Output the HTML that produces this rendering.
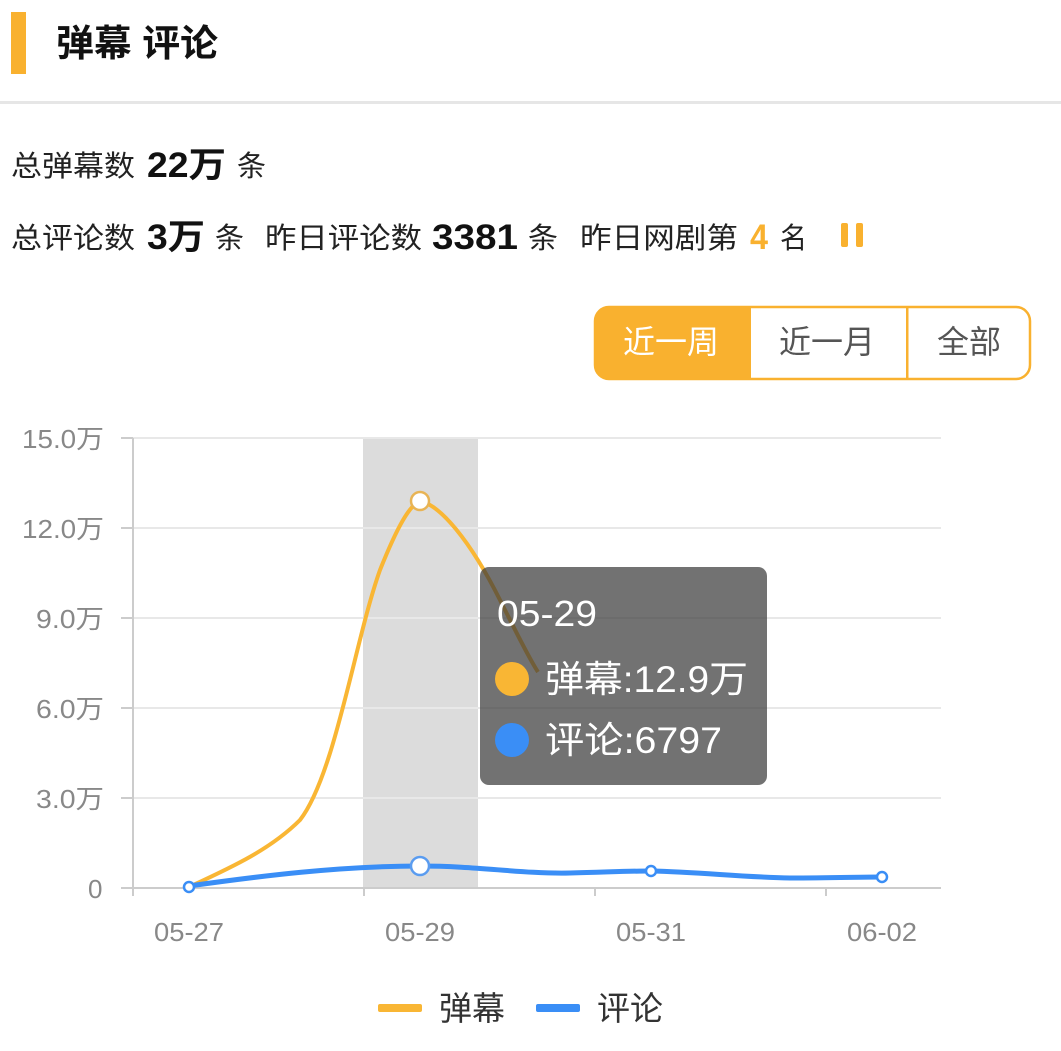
<!DOCTYPE html>
<html><head><meta charset="utf-8"><style>
html,body{margin:0;padding:0;background:#fff;width:1061px;height:1051px;overflow:hidden}
svg{display:block}
text{font-family:"Liberation Sans","Noto Sans CJK SC",sans-serif}
</style></head><body>
<svg width="1061" height="1051" viewBox="0 0 1061 1051" xmlns="http://www.w3.org/2000/svg">
<rect x="11" y="12" width="15" height="62" fill="#f9b12f"/>
<text x="56" y="56" font-size="37" font-weight="bold" fill="#111" textLength="162" lengthAdjust="spacingAndGlyphs">弹幕 评论</text>
<rect x="0" y="101" width="1061" height="3" fill="#e6e6e6"/>

<g fill="#222" font-size="29">
<text x="11" y="176" textLength="124" lengthAdjust="spacingAndGlyphs">总弹幕数</text>
<text x="147" y="177" font-size="35" font-weight="bold" fill="#111" textLength="79" lengthAdjust="spacingAndGlyphs">22万</text>
<text x="237" y="176" textLength="29" lengthAdjust="spacingAndGlyphs">条</text>

<text x="11" y="248" textLength="124" lengthAdjust="spacingAndGlyphs">总评论数</text>
<text x="147" y="249" font-size="35" font-weight="bold" fill="#111" textLength="58" lengthAdjust="spacingAndGlyphs">3万</text>
<text x="215" y="248" textLength="29" lengthAdjust="spacingAndGlyphs">条</text>
<text x="265" y="248" textLength="157" lengthAdjust="spacingAndGlyphs">昨日评论数</text>
<text x="432" y="249" font-size="35" font-weight="bold" fill="#111" textLength="86" lengthAdjust="spacingAndGlyphs">3381</text>
<text x="528" y="248" textLength="30" lengthAdjust="spacingAndGlyphs">条</text>
<text x="580" y="248" textLength="158" lengthAdjust="spacingAndGlyphs">昨日网剧第</text>
<text x="750" y="249" font-size="35" font-weight="bold" fill="#f9b12f" textLength="18" lengthAdjust="spacingAndGlyphs">4</text>
<text x="780" y="248" textLength="27" lengthAdjust="spacingAndGlyphs">名</text>
</g>
<rect x="841" y="223" width="7" height="24" rx="2" fill="#f9b12f"/>
<rect x="856" y="223" width="7" height="24" rx="2" fill="#f9b12f"/>

<rect x="595" y="307" width="435" height="72" rx="14" fill="#fff" stroke="#f9b12f" stroke-width="2.5"/>
<path d="M609 307 H751 V379 H609 A14 14 0 0 1 595 365 V321 A14 14 0 0 1 609 307 Z" fill="#f9b12f"/>
<rect x="906" y="307" width="2.5" height="72" fill="#f9b12f"/>
<text x="671" y="353" font-size="32" fill="#fff" text-anchor="middle">近一周</text>
<text x="827" y="353" font-size="32" fill="#555" text-anchor="middle">近一月</text>
<text x="969" y="353" font-size="32" fill="#555" text-anchor="middle">全部</text>

<!-- chart -->
<rect x="363" y="438" width="115" height="450" fill="#dcdcdc"/>
<g stroke="#e8e8e8" stroke-width="2">
<line x1="133" y1="438" x2="941" y2="438"/><line x1="133" y1="528" x2="941" y2="528"/>
<line x1="133" y1="618" x2="941" y2="618"/><line x1="133" y1="708" x2="941" y2="708"/>
<line x1="133" y1="798" x2="941" y2="798"/>
</g>
<g stroke="#ccc" stroke-width="2">
<line x1="133" y1="438" x2="133" y2="896"/>
<line x1="121" y1="888" x2="941" y2="888"/>
<line x1="364" y1="888" x2="364" y2="896"/><line x1="595" y1="888" x2="595" y2="896"/><line x1="826" y1="888" x2="826" y2="896"/>
<line x1="121" y1="438" x2="133" y2="438"/><line x1="121" y1="528" x2="133" y2="528"/><line x1="121" y1="618" x2="133" y2="618"/><line x1="121" y1="708" x2="133" y2="708"/><line x1="121" y1="798" x2="133" y2="798"/>
</g>
<g font-size="26" fill="#888">
<text x="22" y="448" textLength="82" lengthAdjust="spacingAndGlyphs">15.0万</text>
<text x="22" y="538" textLength="82" lengthAdjust="spacingAndGlyphs">12.0万</text>
<text x="36" y="628" textLength="68" lengthAdjust="spacingAndGlyphs">9.0万</text>
<text x="36" y="718" textLength="68" lengthAdjust="spacingAndGlyphs">6.0万</text>
<text x="36" y="808" textLength="68" lengthAdjust="spacingAndGlyphs">3.0万</text>
<text x="88" y="898">0</text>
</g>
<g font-size="26" fill="#888">
<text x="154" y="941" textLength="70" lengthAdjust="spacingAndGlyphs">05-27</text>
<text x="385" y="941" textLength="70" lengthAdjust="spacingAndGlyphs">05-29</text>
<text x="616" y="941" textLength="70" lengthAdjust="spacingAndGlyphs">05-31</text>
<text x="847" y="941" textLength="70" lengthAdjust="spacingAndGlyphs">06-02</text>
</g>
<path d="M189 887 C230 868 270 850 300 820 C335 775 355 640 380 570 C398 525 410 505 420 501 C440 505 470 540 500 600 C515 630 530 660 538 672" fill="none" stroke="#f9b634" stroke-width="4"/>
<path d="M189 886 C260 876 340 866 420 866 C480 866 520 874 570 873 C610 872 630 871 651 871 C700 872 740 877 790 878 C830 878 860 877 882 877" fill="none" stroke="#3a8ef6" stroke-width="5"/>
<circle cx="420" cy="501" r="9" fill="#fff" stroke="#e8b455" stroke-width="2.5"/>
<circle cx="420" cy="866" r="9" fill="#fff" stroke="#5a9cf0" stroke-width="2.5"/>
<circle cx="189" cy="887" r="5" fill="#fff" stroke="#3a8ef6" stroke-width="2.5"/>
<circle cx="651" cy="871" r="5" fill="#fff" stroke="#3a8ef6" stroke-width="2.5"/>
<circle cx="882" cy="877" r="5" fill="#fff" stroke="#3a8ef6" stroke-width="2.5"/>

<rect x="480" y="567" width="287" height="218" rx="9" fill="rgb(60,60,60)" fill-opacity="0.72"/>
<text x="497" y="626" font-size="36" fill="#fff" textLength="100" lengthAdjust="spacingAndGlyphs">05-29</text>
<circle cx="512" cy="679" r="17" fill="#f9b634"/>
<text x="545" y="692" font-size="37" fill="#fff" textLength="203" lengthAdjust="spacingAndGlyphs">弹幕:12.9万</text>
<circle cx="512" cy="740" r="17" fill="#3a8ef6"/>
<text x="545" y="753" font-size="37" fill="#fff" textLength="177" lengthAdjust="spacingAndGlyphs">评论:6797</text>

<rect x="378" y="1004" width="44" height="8" rx="2" fill="#f9b634"/>
<text x="439" y="1020" font-size="33" fill="#333" textLength="66" lengthAdjust="spacingAndGlyphs">弹幕</text>
<rect x="536" y="1004" width="44" height="8" rx="2" fill="#3a8ef6"/>
<text x="597" y="1020" font-size="33" fill="#333" textLength="66" lengthAdjust="spacingAndGlyphs">评论</text>
</svg>
</body></html>
